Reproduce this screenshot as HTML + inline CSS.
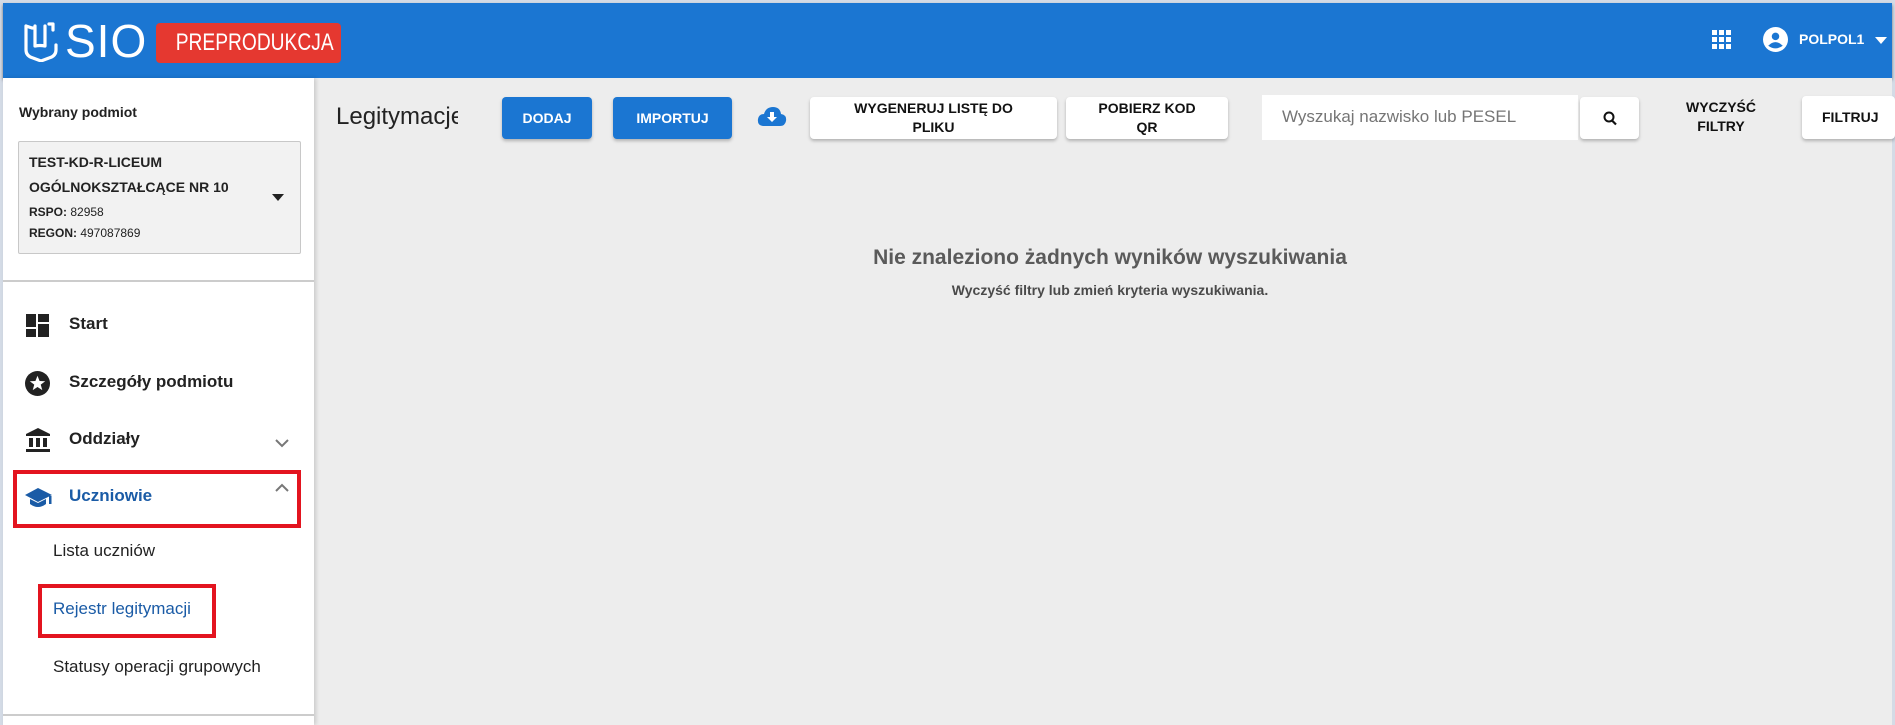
<!DOCTYPE html>
<html><head><meta charset="utf-8"><style>
*{box-sizing:border-box;margin:0;padding:0}
body{width:1895px;height:725px;overflow:hidden;background:#d4dbe6;font-family:"Liberation Sans",sans-serif;position:relative}
.abs{position:absolute}
#hdr{left:3px;top:3px;width:1889px;height:75px;background:#1b76d2;box-shadow:0 2px 3px rgba(0,0,0,.5)}
#main{left:314px;top:78px;width:1578px;height:647px;background:#ededed}
#side{left:3px;top:78px;width:311px;height:647px;background:#fff;box-shadow:2px 0 4px rgba(0,0,0,.15)}
.btn{position:absolute;border-radius:4px;font-size:14px;font-weight:bold;display:flex;align-items:center;justify-content:center;text-align:center;line-height:19px;box-shadow:0 2px 3px rgba(0,0,0,.25)}
.blue{background:#1b76d2;color:#fff}
.white{background:#fff;color:#111}
.nav{position:absolute;left:66px;font-size:17px;font-weight:bold;color:#222}
.sub{position:absolute;left:50px;font-size:17px;color:#222}
.red{position:absolute;border:4px solid #e3141f}
</style></head><body>
<div id="hdr" class="abs">
 <svg class="abs" style="left:20px;top:19px" width="36" height="40" viewBox="0 0 36 40"><path d="M3 4 L3 28 Q3 34 10 36 L18 39 L26 36 Q33 34 33 28 L33 23 M3 4 L9 6 L11 6 M12 4 L12 24 Q17 23 22 24 L22 4 M26 2 L30 2 L30 8" fill="none" stroke="#fff" stroke-width="3.2" stroke-linejoin="round" stroke-linecap="round"/></svg>
 <div class="abs" style="left:62px;top:12px;color:#fff;font-size:46px;letter-spacing:1px;line-height:52px">SIO</div>
 <div class="abs" style="left:153px;top:20px;width:185px;height:40px;background:#e53830;border-radius:4px;color:#fff;font-size:24px;line-height:40px;text-align:center;overflow:hidden"><span style="display:inline-block;transform:scaleX(0.8);white-space:nowrap">PREPRODUKCJA</span></div>
 <svg class="abs" style="left:1709px;top:27px" width="20" height="20" viewBox="0 0 20 20" fill="#fff"><rect x="0" y="0" width="5" height="5"/><rect x="7" y="0" width="5" height="5"/><rect x="14" y="0" width="5" height="5"/><rect x="0" y="7" width="5" height="5"/><rect x="7" y="7" width="5" height="5"/><rect x="14" y="7" width="5" height="5"/><rect x="0" y="14" width="5" height="5"/><rect x="7" y="14" width="5" height="5"/><rect x="14" y="14" width="5" height="5"/></svg>
 <svg class="abs" style="left:1760px;top:24px" width="25" height="25" viewBox="0 0 24 24"><circle cx="12" cy="12" r="12" fill="#fff"/><circle cx="12" cy="9" r="3.6" fill="#1b76d2"/><path d="M5 18 Q12 11 19 18 Q12 23 5 18Z" fill="#1b76d2"/></svg>
 <div class="abs" style="left:1796px;top:28px;color:#fff;font-size:14px;font-weight:bold">POLPOL1</div>
 <div class="abs" style="left:1872px;top:34px;width:0;height:0;border-left:6px solid transparent;border-right:6px solid transparent;border-top:7px solid #fff"></div>
</div>
<div id="main" class="abs"></div>
<div id="side" class="abs">
 <div class="abs" style="left:16px;top:26px;font-size:14px;font-weight:bold;color:#222">Wybrany podmiot</div>
 <div class="abs" style="left:15px;top:63px;width:283px;height:113px;background:#f2f2f2;border:1px solid #c8c8c8;border-radius:2px">
  <div class="abs" style="left:10px;top:12px;font-size:14px;font-weight:bold;color:#222;white-space:nowrap">TEST-KD-R-LICEUM</div>
  <div class="abs" style="left:10px;top:37px;font-size:14px;font-weight:bold;color:#222;white-space:nowrap">OGÓLNOKSZTAŁCĄCE NR 10</div>
  <div class="abs" style="left:10px;top:63px;font-size:12px;color:#222"><b>RSPO:</b> 82958</div>
  <div class="abs" style="left:10px;top:84px;font-size:12px;color:#222"><b>REGON:</b> 497087869</div>
  <div class="abs" style="left:253px;top:52px;border-left:6px solid transparent;border-right:6px solid transparent;border-top:7px solid #222"></div>
 </div>
 <div class="abs" style="left:0;top:202px;width:311px;height:2px;background:#ccc"></div>
 <svg class="abs" style="left:23px;top:236px" width="23" height="23" viewBox="0 0 23 23" fill="#222"><rect x="0" y="0" width="10" height="13"/><rect x="12" y="0" width="11" height="8"/><rect x="0" y="15" width="10" height="8"/><rect x="12" y="10" width="11" height="13"/></svg>
 <div class="nav" style="top:236px">Start</div>
 <svg class="abs" style="left:22px;top:293px" width="25" height="25" viewBox="0 0 24 24"><circle cx="12" cy="12" r="12" fill="#222"/><path d="M12 4.5 L14 9.6 L19.4 9.8 L15.1 13.1 L16.6 18.4 L12 15.3 L7.4 18.4 L8.9 13.1 L4.6 9.8 L10 9.6Z" fill="#fff"/></svg>
 <div class="nav" style="top:294px">Szczegóły podmiotu</div>
 <svg class="abs" style="left:23px;top:350px" width="24" height="25" viewBox="0 0 24 25" fill="#222"><path d="M12 0 L24 6 L24 8 L0 8 L0 6Z"/><rect x="3" y="10" width="4" height="9"/><rect x="10" y="10" width="4" height="9"/><rect x="17" y="10" width="4" height="9"/><rect x="0" y="21" width="24" height="3"/></svg>
 <div class="nav" style="top:351px">Oddziały</div>
 <svg class="abs" style="left:272px;top:361px" width="14" height="9" viewBox="0 0 14 9"><path d="M1 1 L7 7 L13 1" fill="none" stroke="#777" stroke-width="2"/></svg>
 <div class="red" style="left:10px;top:392px;width:288px;height:58px"></div>
 <svg class="abs" style="left:22px;top:410px" width="28" height="20" viewBox="0 0 28 20" fill="#1a5ba6"><path d="M13 0 L27 7 L13 14 L0 7Z"/><path d="M5 11 L5 16 Q13 22 21 16 L21 11 L13 15Z"/><rect x="24" y="8" width="2.5" height="8"/></svg>
 <div class="nav" style="top:408px;color:#1a5ba6">Uczniowie</div>
 <svg class="abs" style="left:272px;top:405px" width="14" height="9" viewBox="0 0 14 9"><path d="M1 8 L7 2 L13 8" fill="none" stroke="#777" stroke-width="2"/></svg>
 <div class="sub" style="top:463px">Lista uczniów</div>
 <div class="red" style="left:35px;top:506px;width:178px;height:54px"></div>
 <div class="sub" style="top:521px;color:#1a5ba6">Rejestr legitymacji</div>
 <div class="sub" style="top:579px">Statusy operacji grupowych</div>
 <div class="abs" style="left:0;top:636px;width:311px;height:2px;background:#ccc"></div>
</div>
<div class="abs" style="left:336px;top:103px;font-size:24px;color:#222;width:122px;overflow:hidden;white-space:nowrap">Legitymacje</div>
<div class="btn blue" style="left:502px;top:97px;width:90px;height:42px">DODAJ</div>
<div class="btn blue" style="left:613px;top:97px;width:119px;height:42px">IMPORTUJ</div>
<svg class="abs" style="left:757px;top:106px" width="30" height="21" viewBox="0 0 30 21"><path d="M7 20 Q0 20 1 13 Q2 8 7 8 Q9 1 16 1 Q23 1 24 8 Q30 9 29 15 Q28 20 23 20Z" fill="#1b76d2"/><path d="M13 6 L17 6 L17 11 L20 11 L15 16 L10 11 L13 11Z" fill="#fff"/></svg>
<div class="btn white" style="left:810px;top:97px;width:247px;height:42px">WYGENERUJ LISTĘ DO<br>PLIKU</div>
<div class="btn white" style="left:1066px;top:97px;width:162px;height:42px">POBIERZ KOD<br>QR</div>
<div class="abs" style="left:1262px;top:95px;width:316px;height:45px;background:#fff;font-size:17px;color:#757575;padding:12px 0 0 20px">Wyszukaj nazwisko lub PESEL</div>
<div class="btn white" style="left:1580px;top:97px;width:59px;height:42px"><svg width="14" height="15" viewBox="0 0 14 15"><circle cx="6" cy="6" r="4.5" fill="none" stroke="#111" stroke-width="2"/><path d="M9 9.5 L13 13.5" stroke="#111" stroke-width="2.2"/></svg></div>
<div class="abs" style="left:1660px;top:98px;width:122px;text-align:center;font-size:14px;font-weight:bold;line-height:19px;color:#111">WYCZYŚĆ<br>FILTRY</div>
<div class="btn white" style="left:1802px;top:96px;width:93px;height:43px;justify-content:flex-start;padding-left:20px">FILTRUJ</div>
<div class="abs" style="left:814px;top:246px;width:592px;text-align:center;font-size:21px;font-weight:bold;color:#5a5a5a">Nie znaleziono żadnych wyników wyszukiwania</div>
<div class="abs" style="left:814px;top:282px;width:592px;text-align:center;font-size:14px;font-weight:bold;color:#4a4a4a">Wyczyść filtry lub zmień kryteria wyszukiwania.</div>
</body></html>
